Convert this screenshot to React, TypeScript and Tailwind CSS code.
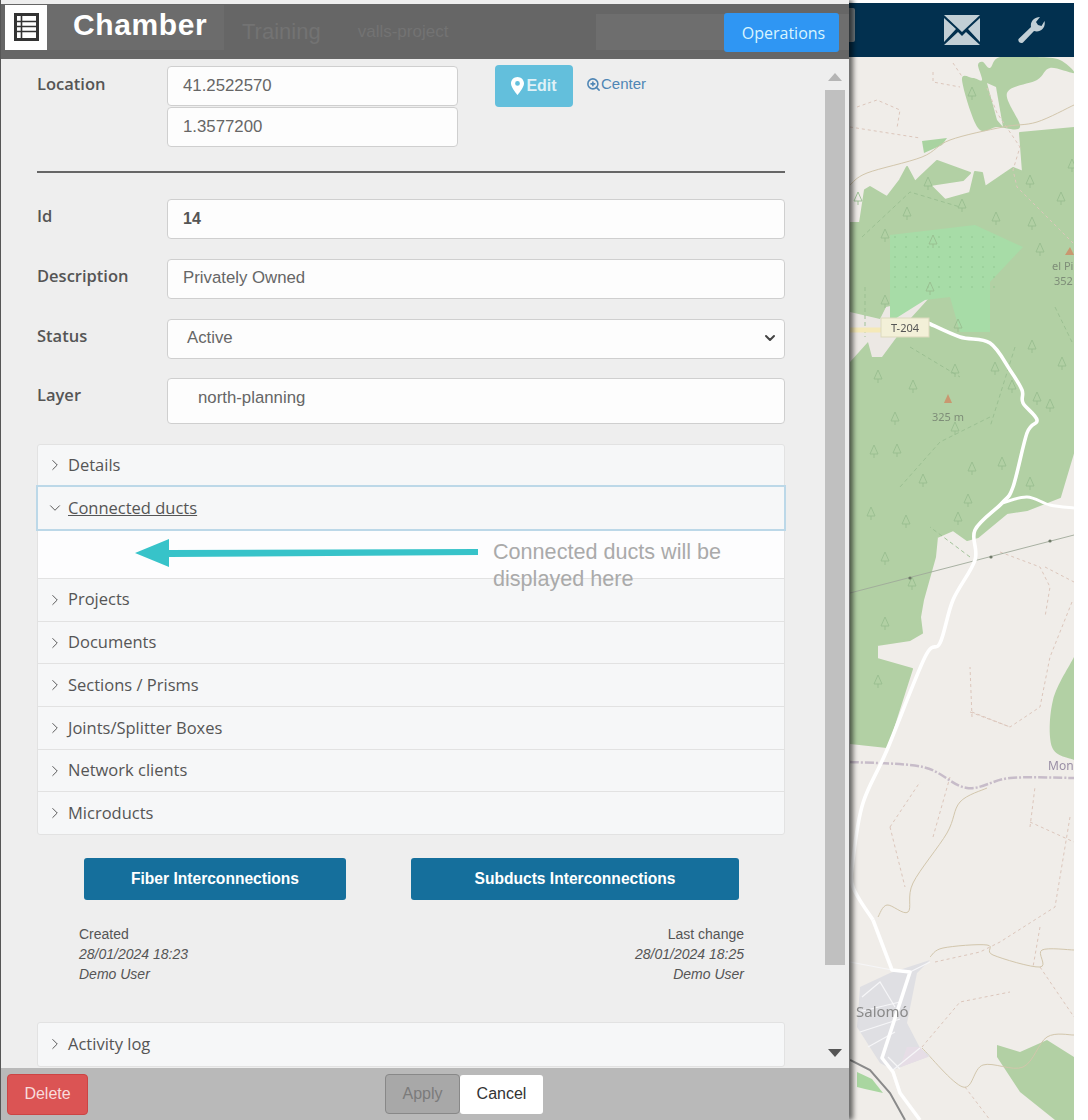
import React from "react";
import { ChevronRight, ChevronDown, ZoomIn } from "lucide-react";

const sans = "font-['Liberation_Sans',Arial,sans-serif]";
const open = "font-['Open_Sans','Noto_Sans',sans-serif]";

type P = [number, number];

function smooth(pts: P[], close = false): string {
  const n = pts.length;
  const at = (i: number): P => (close ? pts[(i + n) % n] : pts[Math.max(0, Math.min(n - 1, i))]);
  let d = `M${pts[0][0]} ${pts[0][1]}`;
  const end = close ? n : n - 1;
  for (let i = 0; i < end; i++) {
    const [p0, p1, p2, p3] = [at(i - 1), at(i), at(i + 1), at(i + 2)];
    const c1 = [p1[0] + (p2[0] - p0[0]) / 6, p1[1] + (p2[1] - p0[1]) / 6];
    const c2 = [p2[0] - (p3[0] - p1[0]) / 6, p2[1] - (p3[1] - p1[1]) / 6];
    d += `C${c1[0].toFixed(1)} ${c1[1].toFixed(1)} ${c2[0].toFixed(1)} ${c2[1].toFixed(1)} ${p2[0]} ${p2[1]}`;
  }
  return d + (close ? "Z" : "");
}

const trees: P[] = [
  [122,30],[8,135],[57,150],[78,120],[112,142],[146,155],[180,118],[182,160],[211,135],[222,102],[190,186],
  [35,238],[80,225],[108,262],[35,172],[83,178],[182,283],[162,323],[145,305],[105,307],[63,323],[187,335],[200,342],
  [28,313],[45,355],[105,365],[122,405],[152,400],[118,437],[73,417],[24,388],[47,387],[180,420],[21,450],[56,458],
  [108,455],[35,495],[62,520],[28,618],[35,560],[212,300],
];

const forest: P[] = [
  [10,166],[15,133],[20,130],[37,140],[50,123],[57,110],[65,125],[70,120],[87,104],[120,116],[113,123],[80,128],[95,143],[120,136],[125,115],[132,116],[135,130],[157,115],[163,111],[173,115],[170,76],
  [224,71],[224,393],[210,440],[177,453],[157,456],[128,480],[117,483],[103,473],[87,480],[85,500],[73,543],[70,560],[72,576],[60,583],[27,588],[27,602],[62,612],[37,690],[0,686],[0,166],
];
const forestTop: P[] = [
  [112,23],[128,71],[147,70],[170,70],[157,36],[187,23],[200,11],[224,16],[210,3],[187,0],[150,0],[140,11],[133,5],[128,8],[132,23],[123,21],
];
const road: P[] = [[78,266],[110,280],[140,286],[160,313],[172,333],[173,346],[187,363],[177,376],[163,430],[152,446],[125,473],[125,503],[103,543],[90,586],[75,600],[37,693],[13,746],[3,803],[3,830],[23,863]];
const roadB: P[] = [[23,863],[42,913],[60,915],[32,1001],[43,1015],[50,1036],[70,1063]];

const accordionTop = ["Projects", "Documents", "Sections / Prisms", "Joints/Splitter Boxes", "Network clients", "Microducts"];

function MapSvg() {
  return (
    <svg viewBox="0 0 224 1063" className="block w-[224px] h-[1063px] blur-[0.6px]">
      <rect width="224" height="1063" fill="#f0ede9" />
      <path d={"M" + forest.map((p) => p.join(" ")).join("L") + "Z"} fill="#b2d0a4" stroke="#b2d0a4" strokeWidth="2" strokeLinejoin="round" />
      <path d={smooth(forestTop, true)} fill="#b2d0a4" />
      <path d="M137 26L147 63L153 70L146 30Z" fill="#f0ede9" />
      <path d="M72 84L97 81L92 88L74 96Z" fill="#a9d3a0" />
      <path d="M0 255L30 262L36 250L80 240L60 262L32 300L22 300L18 285L0 305Z" fill="#ece8e4" />
      <path d={smooth([[224, 600], [203, 643], [202, 690], [224, 703]])} fill="#b2d0a4" />
      <path d="M147 988L170 995L197 983L224 1000L224 1063L205 1063L170 1035L147 1000Z" fill="#b2d0a4" />
      <path d="M40 178L125 168L173 190L140 225L140 275L110 275L100 240L75 243L40 265Z" fill="#a7dca7" />
      <g fill="#8fc78f">
        {Array.from({ length: 60 }, (_, i) => (
          <circle key={i} cx={45 + (i % 10) * 11} cy={180 + Math.floor(i / 10) * 10} r="0.8" />
        ))}
      </g>
      <g fill="none" stroke="#98bd90" strokeWidth="0.9">
        {trees.map(([x, y], i) => (
          <path key={i} d={`M${x} ${y}L${x - 4} ${y + 9}L${x + 4} ${y + 9}ZM${x} ${y + 9}V${y + 13}`} />
        ))}
        <path d="M12 180L60 135L110 150M165 290L140 370M205 250L222 285M15 230V280M60 290L110 320M140 360L90 385L50 430M120 500L80 470" strokeDasharray="4 3" />
      </g>
      <g fill="none" stroke="#dcc6bb" strokeWidth="1" strokeDasharray="3 3">
        <path d="M103 6L113 21M83 15V25L110 30M7 50L27 43L50 53L47 71M0 70L70 81M137 31L147 56L170 90L163 113L167 130L223 186" />
        <path d="M150 495L190 510L200 530L195 560M195 510L224 525M83 780L100 720M120 655L160 670L190 650L200 600L222 545M40 770L55 830M40 770L70 725M122 660L120 610M122 655L160 670M180 770L185 730M180 765L224 785M220 760L205 850L150 885L130 895L85 905M190 870L183 910M190 910L224 960M72 990L110 945L160 935M115 1030L140 1063" />
      </g>
      <path d="M0 536L224 478" fill="none" stroke="#9fa99a" strokeWidth="0.9" />
      <circle cx="60" cy="521" r="1.6" fill="#6f7a68" /><circle cx="141" cy="500" r="1.6" fill="#6f7a68" /><circle cx="200" cy="484" r="1.6" fill="#6f7a68" />
      <path d={smooth([[0, 705], [73, 710], [117, 731], [160, 721], [224, 721]])} fill="none" stroke="#c7bcc9" strokeWidth="2.5" strokeDasharray="9 2 2 2" />
      <g fill="none" stroke="#d2c6ac" strokeWidth="1">
        <path d={smooth([[0, 128], [17, 116], [72, 100], [100, 83], [153, 70], [187, 65], [224, 48]])} />
        <path d={smooth([[137, 731], [110, 745], [97, 776], [63, 826], [58, 855], [37, 848], [28, 860]])} />
        <path d={smooth([[80, 900], [93, 891], [137, 888], [143, 898], [190, 910], [192, 893], [224, 893]])} />
        <path d={smooth([[72, 991], [113, 1030], [133, 1008], [173, 1010], [197, 980], [224, 978]])} />
      </g>
      <path d="M0 273H32" stroke="#f5e9b8" strokeWidth="5" />
      <path d="M10 930L40 916L80 903L67 916L57 966L70 991L80 999L43 1013L30 1006L7 970Z" fill="#dfdfe3" />
      <path d="M57 990L70 990L78 1000L50 1010Z" fill="#e6dde6" />
      <g fill="none" stroke="#f6f6f8" strokeWidth="1.2">
        <path d="M12 940L30 925L45 950M8 955L50 945M10 975L50 962M18 990L45 975M43 1013L70 991M38 1000L50 1012M0 905L42 913M60 915L80 905" />
      </g>
      <path d="M7 1015L22 1022L33 1036L15 1032L7 1030Z" fill="#a9d6a0" />
      <path d="M0 1003L20 1013L40 1036L55 1063" fill="none" stroke="#8a8a8a" strokeWidth="2" />
      <path d={smooth(road)} fill="none" stroke="#ffffff" strokeWidth="3.6" strokeLinejoin="round" />
      <path d={"M" + roadB.map((p) => p.join(" ")).join("L")} fill="none" stroke="#ffffff" strokeWidth="3.6" strokeLinejoin="round" />
      <path d={smooth([[152, 446], [177, 440], [200, 448], [224, 451]])} fill="none" stroke="#ffffff" strokeWidth="3" />
      <rect x="31" y="261" width="48" height="19" fill="#f3f0d8" stroke="#dcd9bd" />
      <text x="55" y="275" textAnchor="middle" fontSize="11" fill="#555" fontFamily="Noto Sans">T-204</text>
      <path d="M98 337L102 346H94Z" fill="#c99870" />
      <text x="82" y="364" fontSize="11" fill="#7e8d78" fontFamily="Noto Sans">325 m</text>
      <path d="M220 190L224 198H215Z" fill="#c99870" />
      <text x="202" y="213" fontSize="11" fill="#7e8d78" fontFamily="Noto Sans">el Pi</text>
      <text x="204" y="228" fontSize="11" fill="#7e8d78" fontFamily="Noto Sans">352</text>
      <text x="198" y="713" fontSize="12" fill="#9a8fa6" fontFamily="Noto Sans">Mon</text>
      <text x="6" y="960" fontSize="15" fill="#8a8a8a" fontFamily="Noto Sans">Salomó</text>
    </svg>
  );
}

function Field({ label, children, className = "" }: { label: string; children: React.ReactNode; className?: string }) {
  return (
    <div className={`flex ${className}`}>
      <div className={`w-[130px] shrink-0 pt-[5px] text-[16.5px] font-semibold text-[#555] ${open}`}>{label}</div>
      {children}
    </div>
  );
}

function Input({ children, className = "" }: { children: React.ReactNode; className?: string }) {
  return (
    <div className={`flex items-center h-[40px] bg-white/90 border border-[#cfcfcf] rounded-[4px] pl-[15px] text-[#666] text-[16.8px] ${sans} ${className}`}>
      {children}
    </div>
  );
}

function AccItem({ label, border = true, h = "h-[42.7px]" }: { label: string; border?: boolean; h?: string }) {
  return (
    <div className={`flex items-center ${h} pl-[8px] gap-[4px] text-[#555] text-[16.5px] ${open} ${border ? "border-t border-[#e2e2e2]" : ""}`}>
      <ChevronRight size={18} strokeWidth={1.3} className="shrink-0" />
      <span>{label}</span>
    </div>
  );
}

export default function App() {
  return (
    <div className="flex w-[1088px] h-[1120px] bg-white overflow-hidden">
      <div className="relative z-10 flex flex-col w-[849px] h-[1120px] shrink-0 pt-[4px] bg-[#eeeeee] border-l border-[#555] shadow-[4px_0_5px_rgba(0,0,0,0.6)]">
        {/* header */}
        <div className="relative flex items-center h-[55px] shrink-0 bg-[#666666] pl-[4px]">
          <div className="flex items-center justify-center w-[42px] h-[45px] -mt-[9px] bg-white">
            <svg width="25" height="28" viewBox="0 0 25 28">
              <rect width="25" height="28" fill="#333" />
              <rect x="3" y="3" width="19" height="22" fill="#fff" />
              <path d="M3 8.5H22M3 13.5H22M3 18.5H22M7.5 3V25" stroke="#333" strokeWidth="1.6" />
            </svg>
          </div>
          <div className="flex items-center h-[45px] w-[177px] bg-[#6c6c6c] pl-[26px] pb-[4px] -mt-[9px]">
            <span className={`text-[30px] leading-none font-bold text-white tracking-[0.6px] ${sans}`}>Chamber</span>
          </div>
          <span className={`ml-[18px] text-[22px] text-[#737373] ${sans}`}>Training</span>
          <span className={`ml-[37px] text-[17px] text-[#737373] ${sans}`}>valls-project</span>
          <div className="ml-auto w-[253px] h-[36px] bg-[#6e6e6e]" />
          <button className={`absolute left-[723px] top-[9px] w-[115px] h-[39px] pl-[4px] rounded-[3px] bg-[#2f96f3] text-[#d8f4ff] text-[16px] ${open}`}>Operations</button>
        </div>

        {/* body */}
        <div className="flex flex-1 min-h-0">
          <div className="w-[788px] shrink-0 pl-[36px] pr-[4px] overflow-hidden">
            <div className="flex h-[81px] mt-[7px]">
              <div className={`w-[130px] pt-[6px] text-[16.5px] font-semibold text-[#555] ${open}`}>Location</div>
              <div className="flex flex-col w-[291px] gap-[1px]">
                <Input>41.2522570</Input>
                <Input>1.3577200</Input>
              </div>
              <button className={`flex items-center justify-center ml-[37px] w-[78px] h-[42px] -mt-[1px] gap-[2px] rounded-[4px] bg-[#63bfdc] text-[#dff1f7] text-[16px] font-bold ${sans}`}>
                <svg width="13" height="18" viewBox="0 0 13 18">
                  <path d="M6.5 0C3 0 0 2.8 0 6.4C0 10.5 6.5 18 6.5 18S13 10.5 13 6.4C13 2.8 10 0 6.5 0ZM6.5 8.8A2.4 2.4 0 1 1 6.5 4A2.4 2.4 0 0 1 6.5 8.8Z" fill="#fff" />
                </svg>
                Edit
              </button>
              <div className={`flex items-center h-[36px] ml-[13px] text-[#4f86b5] text-[15px] ${sans}`}>
                <ZoomIn size={15} strokeWidth={2.5} />
                Center
              </div>
            </div>
            <div className="h-[2px] mt-[24px] bg-[#666]" />

            <Field label="Id" className="mt-[26px]"><Input className="flex-1 font-bold !text-[#555] !text-[16px]">14</Input></Field>
            <Field label="Description" className="mt-[20px]"><Input className="flex-1 pb-[2px]">Privately Owned</Input></Field>
            <Field label="Status" className="mt-[20px]">
              <Input className="flex-1 justify-between !pl-[19px] pr-[6px] pb-[2px]">
                Active
                <ChevronDown size={16} strokeWidth={3} className="text-[#444]" />
              </Input>
            </Field>
            <Field label="Layer" className="mt-[19px]"><Input className="flex-1 !h-[46px] !pl-[30px] pb-[6px]">north-planning</Input></Field>

            <div className="mt-[20px] bg-[#f6f7f8] border border-[#e2e2e2] rounded-[3px]">
              <AccItem label="Details" border={false} h="h-[40px]" />
              <div className={`relative -mx-[2px] flex items-center h-[46px] pl-[8px] gap-[4px] border-2 border-[#bcd8e8] text-[#555] text-[16.5px] ${open}`}>
                <ChevronDown size={18} strokeWidth={1.3} className="shrink-0" />
                <span className="underline">Connected ducts</span>
              </div>
              <div className="relative h-[47px] bg-white/80">
                <div className="absolute left-[97px] top-[7px] flex items-center">
                  <svg width="343" height="30" viewBox="0 0 343 30">
                    <path d="M0 15L34 1V12L343 11V17L34 19V29Z" fill="#37c3c9" />
                  </svg>
                </div>
                <div className={`absolute z-10 left-[455px] top-[7px] w-[260px] text-[21.6px] leading-[27px] text-[#aaaaaa] ${sans}`}>Connected ducts will be displayed here</div>
              </div>
              {accordionTop.map((l) => <AccItem key={l} label={l} />)}
            </div>

            <div className={`flex mt-[23px] pl-[47px] text-white text-[15.6px] font-bold ${sans}`}>
              <button className="w-[262px] h-[42px] rounded-[3px] bg-[#156f9c]">Fiber Interconnections</button>
              <button className="ml-[65px] w-[328px] h-[42px] rounded-[3px] bg-[#156f9c]">Subducts Interconnections</button>
            </div>

            <div className={`flex justify-between mt-[24px] pl-[42px] pr-[41px] text-[14px] leading-[20px] text-[#555] ${sans}`}>
              <div>
                <div>Created</div>
                <div className="italic">28/01/2024 18:23</div>
                <div className="italic">Demo User</div>
              </div>
              <div className="text-right">
                <div>Last change</div>
                <div className="italic">28/01/2024 18:25</div>
                <div className="italic">Demo User</div>
              </div>
            </div>

            <div className="mt-[38px] bg-[#f6f7f8] border border-[#e2e2e2] rounded-[3px]">
              <AccItem label="Activity log" border={false} />
            </div>
          </div>

          {/* scrollbar */}
          <div className="flex flex-col items-center w-[20px] ml-[36px] mt-[14px] mb-[11px]">
            <svg width="14" height="8" viewBox="0 0 14 8" className="shrink-0"><path d="M7 0L14 8H0Z" fill="#b5b5b5" /></svg>
            <div className="w-full h-[875px] shrink-0 mt-[9px] bg-[#c0c0c0]" />
            <svg width="14" height="8" viewBox="0 0 14 8" className="shrink-0 mt-auto"><path d="M7 8L14 0H0Z" fill="#555" /></svg>
          </div>
        </div>

        {/* footer */}
        <div className={`flex items-center h-[52px] shrink-0 bg-[#b9b9b9] pl-[6px] text-[16px] ${sans}`}>
          <button className="w-[81px] h-[41px] rounded-[4px] bg-[#db5454] border border-[#c44] text-[#f8dcdc]">Delete</button>
          <button className="ml-[297px] w-[75px] h-[40px] rounded-[4px] bg-[#a8a8a8] border border-[#888] text-[#7b7b7b]">Apply</button>
          <button className="w-[83px] h-[39px] rounded-[3px] bg-white text-[#333]">Cancel</button>
        </div>
      </div>

      {/* right side */}
      <div className="flex flex-col w-[225px] shrink-0 pt-[3px] items-end">
        <div className="relative flex items-center w-full h-[54px] shrink-0 bg-[#02304f]">
          <div className="w-[6px] h-[34px] mb-[10px] bg-[#707a80] rounded-r-[2px]" />
          <svg width="36" height="30" viewBox="0 0 36 30" className="ml-[89px]">
            <path d="M0 0L18 17L36 0ZM0 3V27L12 14ZM36 3V27L24 14ZM0 30H36L22 17L18 21L14 17Z" fill="#c2cfd6" />
          </svg>
          <svg width="28" height="28" viewBox="0 0 28 28" className="ml-[37px]">
            <path d="M1.5 23L14 11C13 6 17 1 23 1L19 6L21 9L24.5 10L27.5 5C29 11 24 17 17 15L6 26.5C4 28 0.5 26 1.5 23Z" fill="#c2cfd6" />
          </svg>
        </div>
        <MapSvg />
      </div>
    </div>
  );
}
